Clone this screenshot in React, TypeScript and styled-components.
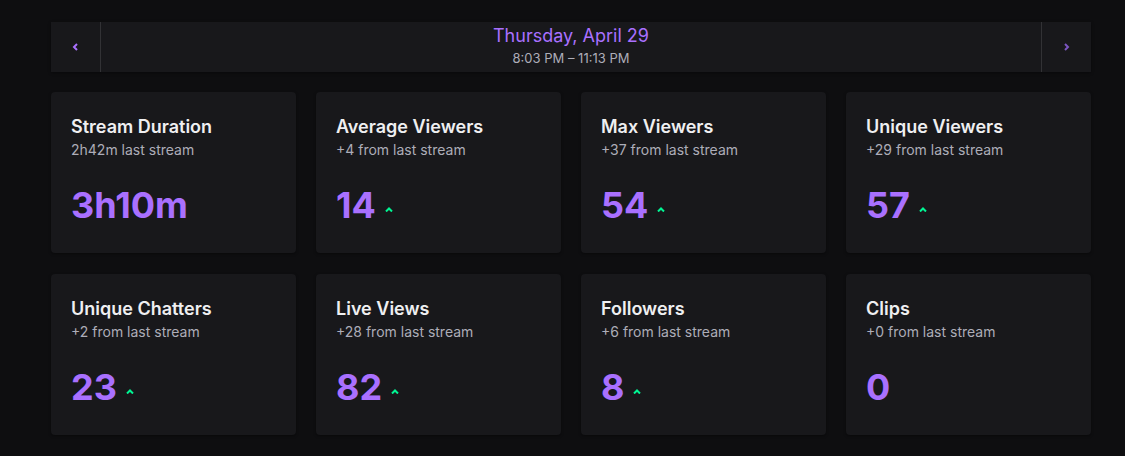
import React from "react";
import styled, { createGlobalStyle } from "styled-components";

/* Styles */
const colors = {
	page: "#0e0e10",
	panel: "#18181b",
	divider: "#323235",
	title: "#efeff1",
	muted: "#adadb8",
	accent: "#a970ff",
	accentDim: "#7b55c0",
	up: "#00f593",
};

const GlobalStyle = createGlobalStyle`
	html, body {
		margin: 0;
		padding: 0;
		background: ${colors.page};
		font-family: Inter, "Noto Sans", sans-serif;
	}
`;

const Page = styled.div`
	min-height: 456px;
	padding: 22px 34px 20px 51px;
	box-sizing: border-box;
`;

const Content = styled.div`
	width: 1040px;
	display: flex;
	flex-direction: column;
	gap: 20px;
`;

const DateBar = styled.div`
	display: flex;
	height: 50px;
	background: ${colors.panel};
	box-shadow: 0 1px 3px rgba(0, 0, 0, 0.4);
`;

const NavButton = styled.button<{ side: "left" | "right"; dim?: boolean }>`
	width: 50px;
	flex: none;
	display: flex;
	align-items: center;
	justify-content: center;
	padding: 0;
	background: transparent;
	border: none;
	${({ side }) => (side === "left" ? "border-right" : "border-left")}: 1px solid ${colors.divider};
	color: ${({ dim }) => (dim ? colors.accentDim : colors.accent)};
	cursor: pointer;
`;

const DateInfo = styled.div`
	flex: 1;
	display: flex;
	flex-direction: column;
	align-items: center;
	padding-top: 2px;
	gap: 2px;
`;

const DateTitle = styled.div`
	color: ${colors.accent};
	font-size: 18px;
	line-height: 24px;
`;

const DateRange = styled.div`
	color: ${colors.muted};
	font-size: 13px;
	line-height: 16px;
`;

const StatGrid = styled.div`
	display: grid;
	grid-template-columns: repeat(4, 245px);
	column-gap: 20px;
	row-gap: 21px;
`;

const StatCard = styled.div`
	height: 161px;
	box-sizing: border-box;
	padding: 21px 20px 20px;
	background: ${colors.panel};
	border-radius: 4px;
	box-shadow: 0 1px 3px rgba(0, 0, 0, 0.4);
`;

const StatTitle = styled.div`
	color: ${colors.title};
	font-size: 18px;
	font-weight: 600;
	line-height: 27px;
`;

const StatCompare = styled.div`
	color: ${colors.muted};
	font-size: 14px;
	line-height: 20px;
`;

const StatValue = styled.div`
	display: flex;
	align-items: center;
	gap: 9px;
	margin-top: 21px;
	color: ${colors.accent};
	font-size: 36px;
	font-weight: 700;
	line-height: 48px;
`;

const UpMark = styled.svg`
	margin-top: 9px;
`;

interface Stat {
	title: string;
	compare: string;
	value: string;
	up: boolean;
}

const stats: Stat[] = [
	{ title: "Stream Duration", compare: "2h42m last stream", value: "3h10m", up: false },
	{ title: "Average Viewers", compare: "+4 from last stream", value: "14", up: true },
	{ title: "Max Viewers", compare: "+37 from last stream", value: "54", up: true },
	{ title: "Unique Viewers", compare: "+29 from last stream", value: "57", up: true },
	{ title: "Unique Chatters", compare: "+2 from last stream", value: "23", up: true },
	{ title: "Live Views", compare: "+28 from last stream", value: "82", up: true },
	{ title: "Followers", compare: "+6 from last stream", value: "8", up: true },
	{ title: "Clips", compare: "+0 from last stream", value: "0", up: false },
];

function Chevron({ dir }: { dir: "left" | "right" }) {
	const d = dir === "left" ? "M5 1 L2 4 L5 7" : "M2 1 L5 4 L2 7";
	return (
		<svg width="7" height="8" viewBox="0 0 7 8">
			<path d={d} fill="none" stroke="currentColor" strokeWidth="2" />
		</svg>
	);
}

export default function App() {
	return (
		<React.Fragment>
			<GlobalStyle />
			<Page>
				<Content>
					<DateBar>
						<NavButton side="left">
							<Chevron dir="left" />
						</NavButton>
						<DateInfo>
							<DateTitle>Thursday, April 29</DateTitle>
							<DateRange>8:03 PM – 11:13 PM</DateRange>
						</DateInfo>
						<NavButton side="right" dim>
							<Chevron dir="right" />
						</NavButton>
					</DateBar>
					<StatGrid>
						{stats.map((stat: Stat) => (
							<StatCard key={stat.title}>
								<StatTitle>{stat.title}</StatTitle>
								<StatCompare>{stat.compare}</StatCompare>
								<StatValue>
									{stat.value}
									{stat.up && (
										<UpMark width="8" height="5" viewBox="0 0 8 5">
											<path d="M1 4.5 L4 1.5 L7 4.5" fill="none" stroke={colors.up} strokeWidth="2" />
										</UpMark>
									)}
								</StatValue>
							</StatCard>
						))}
					</StatGrid>
				</Content>
			</Page>
		</React.Fragment>
	);
}
